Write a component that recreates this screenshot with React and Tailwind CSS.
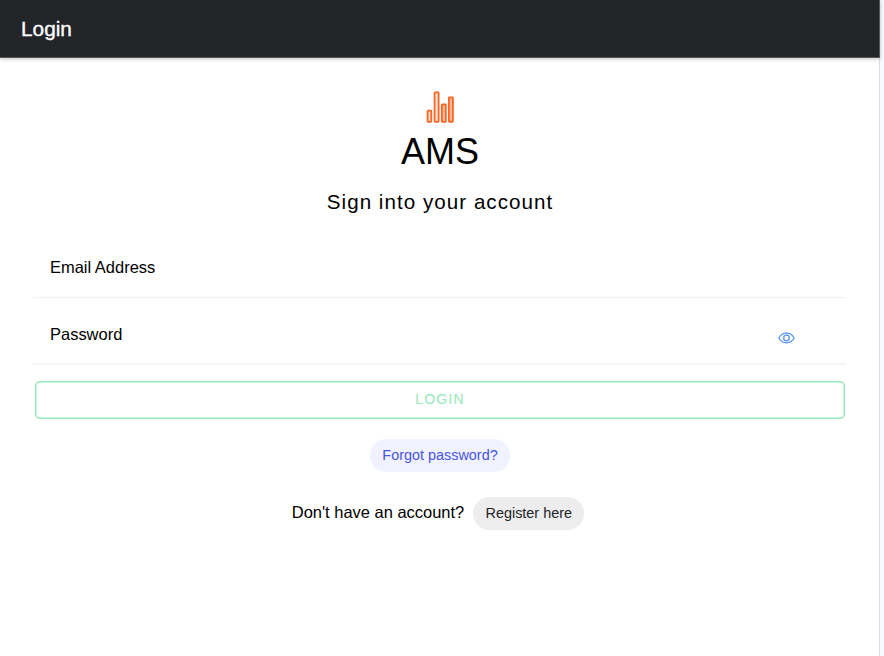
function BarsLogo() {
  return (
    <svg className="block h-8 w-7" viewBox="0 0 28 32" fill="none" stroke="#fb6522" strokeWidth="1.8">
      <rect x="1.6" y="19.6" width="3.7" height="11.2" rx="0.5" fill="#ffe0d2" />
      <rect x="8.6" y="1.4" width="4" height="29.4" rx="0.5" fill="#ffe8de" />
      <rect x="15.8" y="13.4" width="4" height="17.4" rx="0.5" fill="#ffb799" />
      <rect x="22.9" y="6.4" width="4" height="24.4" rx="0.5" fill="#ffb799" />
    </svg>
  );
}

function EyeIcon() {
  return (
    <svg className="block h-3 w-[18px]" viewBox="0 0 18 12" fill="none" stroke="#5291f5" strokeWidth="1.3">
      <path d="M1.8 6 C5.5 -0.4 13.5 -0.4 17.2 6 C13.5 12.4 5.5 12.4 1.8 6Z" />
      <circle cx="9.5" cy="6" r="2.8" />
    </svg>
  );
}

export default function App() {
  return (
    <div className="flex h-[656px] w-[884px] overflow-hidden bg-[#f8faff] font-['Liberation_Sans',Arial,sans-serif] text-black">
      <div className="flex w-[880px] flex-col border-r border-[#e2d9de] bg-white">
        <header className="-mr-px flex h-[58px] shrink-0 items-center border-r border-b border-[#55565a] bg-[#222428] pl-[21px] shadow-[0_1px_4px_rgba(0,0,0,0.25)]">
          <h1 className="text-[20.8px] leading-6 text-white [-webkit-text-stroke:0.35px_white]">Login</h1>
        </header>
        <main className="flex flex-col items-center pt-[33px] pr-[33px] pl-[33px]">
          <BarsLogo />
          <h2 className="mt-[9px] pl-px text-4xl leading-10">AMS</h2>
          <p className="mt-[18px] pl-px text-[20.6px] leading-6 tracking-[1.03px]">Sign into your account</p>
          <form className="flex w-full flex-col">
            <label className="mt-[29px] flex h-[55px] items-start border-b border-[#f1f1f1] pt-3 pl-[17px] text-[16.48px] leading-6">Email Address</label>
            <div className="flex h-[67px] items-start justify-between border-b-2 border-[#f6f6f6] pt-6 pr-[51px] pl-[17px] text-[16.48px] leading-6">
              <label>Password</label>
              <span className="mt-[10px]"><EyeIcon /></span>
            </div>
            <button type="button" className="mt-4 mr-px ml-0.5 flex h-[38px] items-start justify-center rounded border border-[#96e8b7] pt-[7px] text-sm tracking-[1.2px] text-[#96e8b7] shadow-[inset_0_0_0_1px_#c8f4d9]">LOGIN</button>
          </form>
          <a className="mt-5 ml-px flex h-[33px] w-[140px] items-center justify-center rounded-full bg-[#f0f2ff] pb-0.5 text-[14.42px] leading-5 text-[#4854e0]">Forgot password?</a>
          <div className="mt-[25px] mr-[3px] flex items-center gap-[9px]">
            <span className="pb-1 text-[16.48px] leading-6">Don't have an account?</span>
            <a className="flex h-[33px] w-[111px] items-center justify-center rounded-full bg-[#ededed] pb-0.5 text-[14.42px] leading-5 text-[#222428]">Register here</a>
          </div>
        </main>
      </div>
    </div>
  );
}
